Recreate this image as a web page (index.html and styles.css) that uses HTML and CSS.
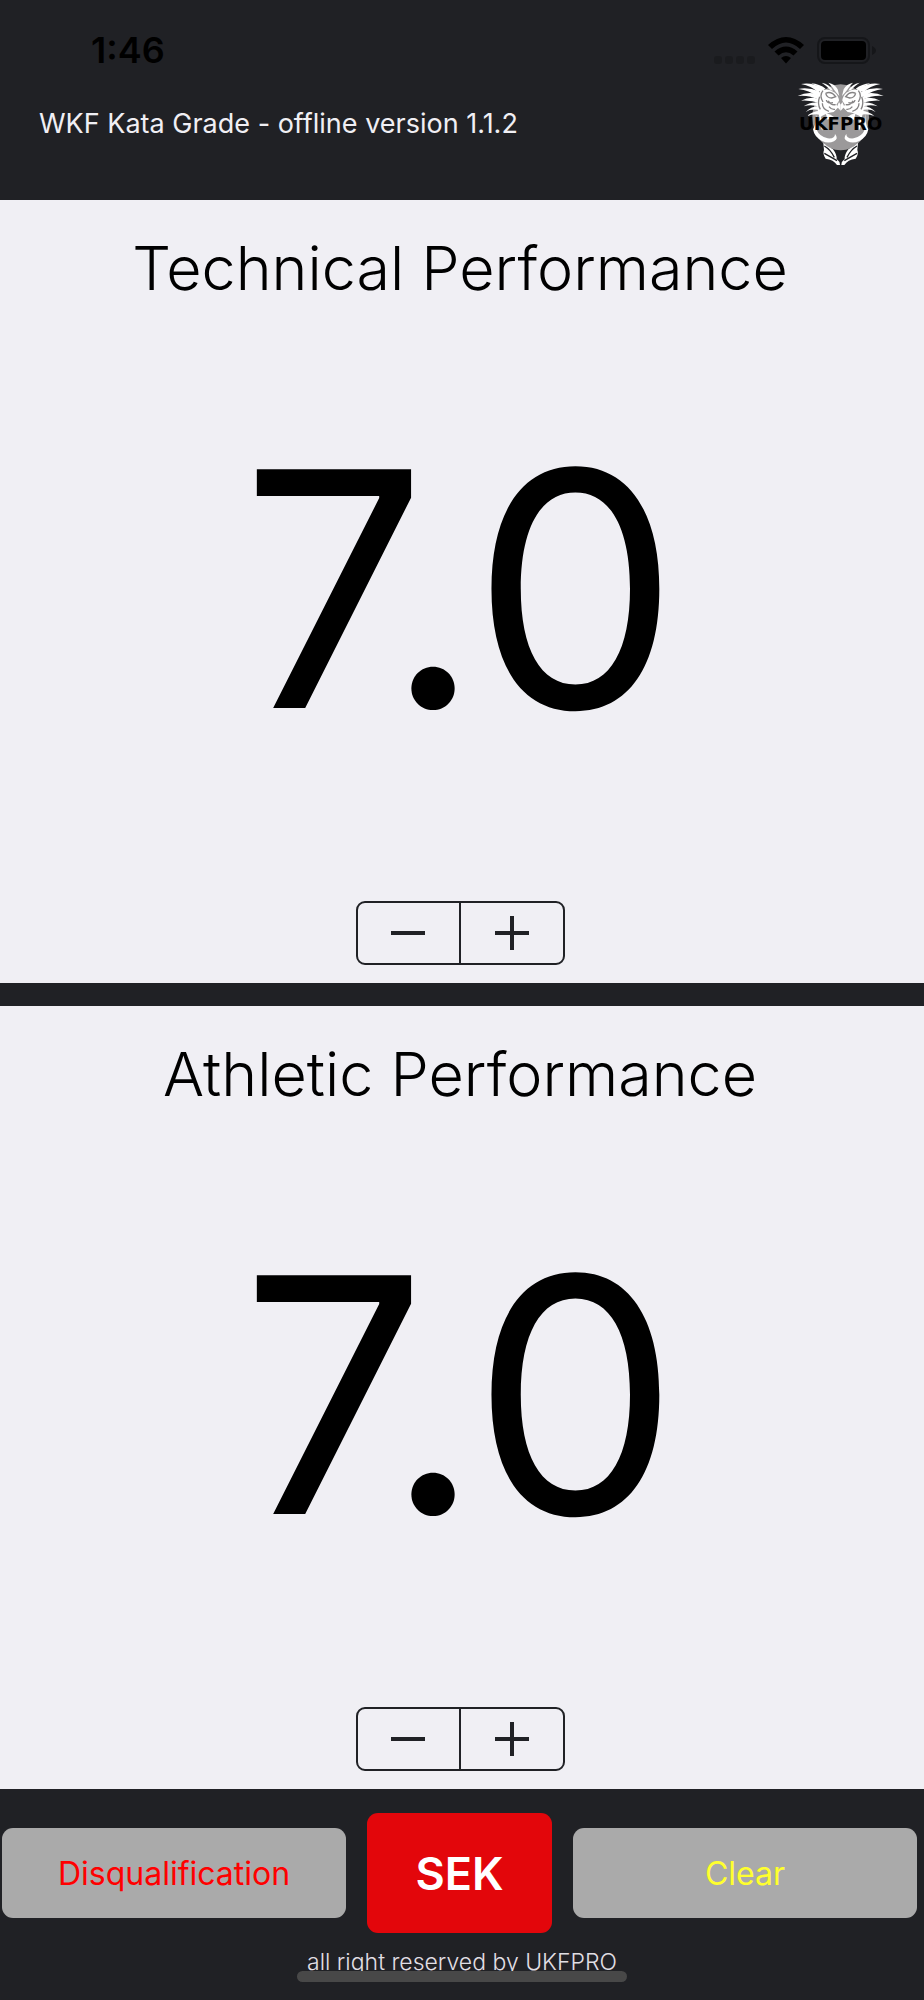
FILE: index.html
```
<!DOCTYPE html>
<html lang="en">
<head>
    <meta charset="UTF-8">
    <meta name="viewport" content="width=device-width, initial-scale=1.0">
    <title>WKF Kata Grade</title>
    <link rel="stylesheet" href="styles.css">
</head>
<body>

    <header class="header">
        <div class="status-bar">
            <span class="time">1:46</span>
            <svg class="signal" width="42" height="8" viewBox="0 0 42 8">
                <rect x="0" width="8" height="8" rx="3"/>
                <rect x="11" width="8" height="8" rx="3"/>
                <rect x="22" width="8" height="8" rx="3"/>
                <rect x="33" width="8" height="8" rx="3"/>
            </svg>
            <svg class="wifi" width="36" height="27" viewBox="0 0 36 27">
                <path d="M0 8 Q18 -8 36 8 L32 12 Q18 -1 4 12 Z"/>
                <path d="M6.500 14.500 Q18 4.500 29.500 14.500 L25.500 18.500 Q18 12 10.500 18.500 Z"/>
                <path d="M13 21 Q18 17 23 21 L18 26.500 Z"/>
            </svg>
            <svg class="battery" width="60" height="27" viewBox="0 0 60 27">
                <rect class="battery-case" x="1" y="1" width="51" height="25" rx="7"/>
                <rect x="4" y="4" width="45" height="19" rx="4"/>
                <path class="battery-tip" d="M55 9 Q59 11 59 13.500 Q59 16 55 18 Z"/>
            </svg>
        </div>
        <div class="title-row">
            <span class="app-title">WKF Kata Grade - offline version 1.1.2</span>
            <svg class="logo" width="88" height="84" viewBox="50 36 264 252" role="img" aria-label="UKFPRO">
                <defs>
                    <g id="half">
                        <!-- crest -->
                        <path class="white" d="M124 38 Q148 42 158 62 L150 60 Q140 48 124 38 Z"/>
                        <path class="white" d="M144 38 Q164 42 172 58 L177 78 Q162 62 158 54 Z"/>
                        <path class="white" d="M62 42 Q92 36 122 52 L134 60 L112 66 Q94 48 62 42 Z"/>
                        <path class="white" d="M92 40 Q118 42 136 56 L124 60 Q110 46 92 40 Z"/>
                        <path class="white" d="M54 57 Q84 51 116 64 L124 82 L108 78 Q88 62 54 57 Z"/>
                        <path class="white" d="M52 78 Q82 63 110 72 L118 90 Q84 74 52 78 Z"/>
                        <path class="white" d="M62 92 Q88 79 112 86 L120 100 Q90 90 62 92 Z"/>
                        <path class="white" d="M70 109 Q90 94 116 98 L122 112 Q94 102 70 109 Z"/>
                        <path class="white" d="M76 126 Q92 108 118 108 L124 122 Q94 114 76 126 Z"/>
                        <path class="white" d="M80 138 Q94 124 120 122 L122 134 Q98 130 80 138 Z"/>
                        <!-- face -->
                        <path class="white" d="M120 62 Q142 52 164 68 Q175 78 176 92 L168 104 L174 112 L160 126 Q132 130 118 144 Q104 100 116 68 Z"/>
                        <path class="line" d="M136 70 Q152 62 166 80 L154 84 Q140 84 136 70 M128 62 Q116 76 128 96 M138 90 Q140 102 158 98 M126 100 Q126 118 146 124 M144 92 Q150 106 166 104 M146 110 Q154 120 164 118 M118 80 Q110 100 120 118"/>
                        <path class="white" d="M146 73 Q156 70 160 79 Q148 82 146 73 Z"/>
                        <path class="white" d="M176 96 L181 104 L181 122 L170 110 Z"/>
                        <!-- mane -->
                        <path class="white" d="M106 126 Q112 160 109 179 Q116 198 142 205 Q164 207 164 192 Q176 206 161 214 Q144 222 125 213 Q102 201 98 178 Q110 158 106 126 Z"/>
                        <path class="white" d="M118 134 Q128 150 126 182 Q118 168 118 134 Z"/>
                        <path class="white" d="M136 130 Q150 132 162 142 Q148 140 142 150 Z"/>
                        <!-- tails -->
                        <path class="white" d="M129 219 Q140 230 158 238 Q170 254 169 267 Q178 273 179 285 L170 285 Q160 269 136 266 Q126 252 131 240 Z"/>
                        <path class="dark-line" d="M132 228 Q150 238 162 262 M132 250 Q150 260 170 272"/>
                    </g>
                </defs>
                <ellipse class="disc" cx="181" cy="142" rx="85" ry="99"/>
                <use href="#half"/>
                <use href="#half" transform="translate(362 0) scale(-1 1)"/>
                <text class="logo-text" x="181" y="179">UKFPRO</text>
            </svg>
        </div>
    </header>

    <main class="scores">
        <section class="panel">
            <h1>Technical Performance</h1>
            <output class="score" id="technical">7.0</output>
            <div class="stepper">
                <button type="button" aria-label="Decrease technical score" onclick="changeScore('technical', -0.2)">
                    <svg width="34" height="34" viewBox="0 0 34 34"><path d="M0 17h34"/></svg>
                </button>
                <button type="button" aria-label="Increase technical score" onclick="changeScore('technical', 0.2)">
                    <svg width="34" height="34" viewBox="0 0 34 34"><path d="M0 17h34M17 0v34"/></svg>
                </button>
            </div>
        </section>

        <section class="panel">
            <h1>Athletic Performance</h1>
            <output class="score" id="athletic">7.0</output>
            <div class="stepper">
                <button type="button" aria-label="Decrease athletic score" onclick="changeScore('athletic', -0.2)">
                    <svg width="34" height="34" viewBox="0 0 34 34"><path d="M0 17h34"/></svg>
                </button>
                <button type="button" aria-label="Increase athletic score" onclick="changeScore('athletic', 0.2)">
                    <svg width="34" height="34" viewBox="0 0 34 34"><path d="M0 17h34M17 0v34"/></svg>
                </button>
            </div>
        </section>
    </main>

    <footer class="footer">
        <div class="actions">
            <button type="button" class="btn disqualify" onclick="setScores('0.0')">Disqualification</button>
            <button type="button" class="btn language">SEK</button>
            <button type="button" class="btn clear" onclick="setScores('7.0')">Clear</button>
        </div>
        <p class="rights">all right reserved by UKFPRO</p>
        <div class="home-bar"></div>
    </footer>

    <script>
        function changeScore(id, step) {
            let score = document.getElementById(id);
            let value = parseFloat(score.textContent) + step;
            value = Math.min(10, Math.max(5, value));
            score.textContent = value.toFixed(1);
        }

        function setScores(value) {
            document.getElementById("technical").textContent = value;
            document.getElementById("athletic").textContent = value;
        }
    </script>

</body>
</html>
```
FILE: styles.css
```
* {
    box-sizing: border-box;
}
body {
    margin: 0;
    min-height: 100vh;
    display: flex;
    flex-direction: column;
    font-family: Inter, "Liberation Sans", sans-serif;
    background-color: #202125;
    color: #000;
}
.header {
    height: 200px;
    padding: 30px 39px 0;
}
.status-bar {
    display: flex;
    align-items: center;
    height: 40px;
    padding: 0 8px 0 52px;
}
.time {
    flex: 1;
    font-size: 36px;
    font-weight: 600;
    line-height: 40px;
}
.signal {
    fill: #1a1b1e;
    margin: 20px 12px 0 0;
}
.wifi {
    margin-right: 13px;
}
.battery-case {
    fill: none;
    stroke: #151619;
    stroke-width: 2;
}
.battery-tip {
    fill: #151619;
}
.title-row {
    display: flex;
    justify-content: space-between;
    align-items: flex-start;
    margin-top: 12px;
}
.app-title {
    color: #f0eff4;
    font-size: 27px;
    line-height: 32px;
    margin-top: 26px;
}
.logo {
    flex: none;
}
.logo .disc {
    fill: #9b999a;
}
.logo .white {
    fill: #fff;
}
.logo .line {
    fill: none;
    stroke: #858384;
    stroke-width: 4;
}
.logo .dark-line {
    fill: none;
    stroke: #202125;
    stroke-width: 4;
}
.logo-text {
    font-family: "DejaVu Sans", sans-serif;
    font-size: 54px;
    font-weight: bold;
    text-anchor: middle;
}
.scores {
    flex: 1;
    display: flex;
    flex-direction: column;
    gap: 23px;
}
.panel {
    flex: 1;
    display: flex;
    flex-direction: column;
    align-items: center;
    background-color: #f0eff4;
    padding: 28px 4px 18px 0;
}
h1 {
    margin: 0;
    font-size: 61px;
    font-weight: 300;
    line-height: 80px;
}
.score {
    flex: 1;
    display: flex;
    align-items: center;
    padding-bottom: 32px;
    font-size: 328px;
    line-height: 400px;
}
.stepper {
    display: flex;
    width: 209px;
    height: 64px;
    border: 2px solid #202125;
    border-radius: 9px;
    overflow: hidden;
}
.stepper button {
    flex: 1;
    display: flex;
    align-items: center;
    justify-content: center;
    padding: 0;
    border: none;
    background: none;
    cursor: pointer;
}
.stepper button + button {
    border-left: 2px solid #202125;
}
.stepper path {
    stroke: #202125;
    stroke-width: 4;
}
.footer {
    height: 211px;
    padding-top: 24px;
}
.actions {
    display: flex;
    align-items: center;
    gap: 21px;
    padding: 0 7px 0 2px;
}
.btn {
    flex: 1;
    height: 90px;
    padding: 0;
    border: none;
    border-radius: 11px;
    background-color: #aaa;
    font-family: inherit;
    font-size: 32px;
    cursor: pointer;
}
.disqualify {
    color: #f00;
}
.clear {
    color: #ffff2e;
}
.language {
    flex: none;
    width: 185px;
    height: 120px;
    background-color: #e3060b;
    color: #fff;
    font-size: 45px;
    font-weight: 600;
}
.rights {
    margin: 14px 0 0;
    color: #e0dfe4;
    font-size: 23px;
    font-weight: 300;
    line-height: 30px;
    text-align: center;
}
.home-bar {
    position: relative;
    width: 330px;
    height: 11px;
    margin: -6px auto 0;
    border-radius: 6px;
    background-color: #484848;
}
```
